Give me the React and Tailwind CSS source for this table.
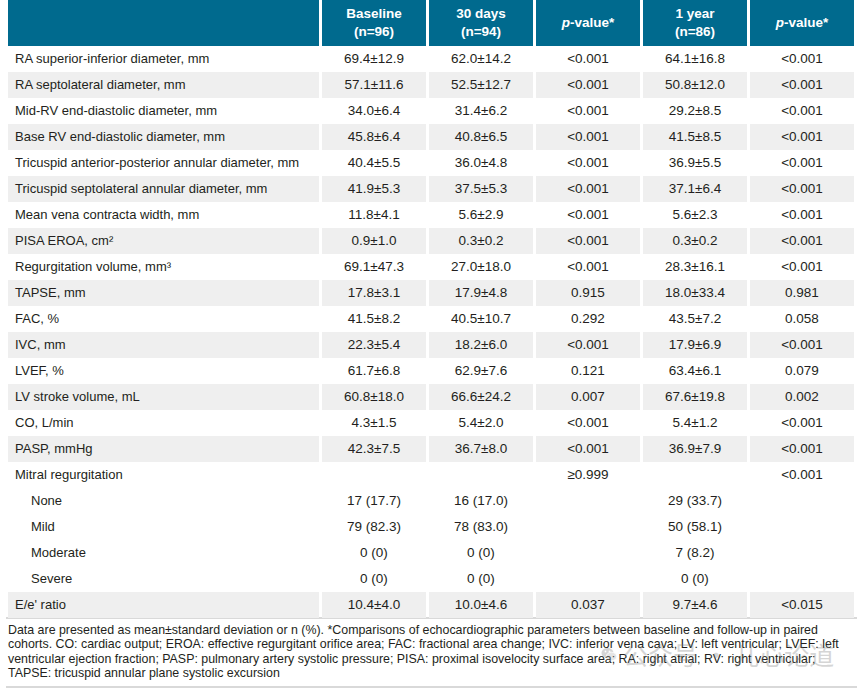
import React from "react";

const rows = [
  { label: "RA superior-inferior diameter, mm", v: ["69.4±12.9", "62.0±14.2", "<0.001", "64.1±16.8", "<0.001"] },
  { label: "RA septolateral diameter, mm", v: ["57.1±11.6", "52.5±12.7", "<0.001", "50.8±12.0", "<0.001"] },
  { label: "Mid-RV end-diastolic diameter, mm", v: ["34.0±6.4", "31.4±6.2", "<0.001", "29.2±8.5", "<0.001"] },
  { label: "Base RV end-diastolic diameter, mm", v: ["45.8±6.4", "40.8±6.5", "<0.001", "41.5±8.5", "<0.001"] },
  { label: "Tricuspid anterior-posterior annular diameter, mm", v: ["40.4±5.5", "36.0±4.8", "<0.001", "36.9±5.5", "<0.001"] },
  { label: "Tricuspid septolateral annular diameter, mm", v: ["41.9±5.3", "37.5±5.3", "<0.001", "37.1±6.4", "<0.001"] },
  { label: "Mean vena contracta width, mm", v: ["11.8±4.1", "5.6±2.9", "<0.001", "5.6±2.3", "<0.001"] },
  { label: "PISA EROA, cm²", v: ["0.9±1.0", "0.3±0.2", "<0.001", "0.3±0.2", "<0.001"] },
  { label: "Regurgitation volume, mm³", v: ["69.1±47.3", "27.0±18.0", "<0.001", "28.3±16.1", "<0.001"] },
  { label: "TAPSE, mm", v: ["17.8±3.1", "17.9±4.8", "0.915", "18.0±33.4", "0.981"] },
  { label: "FAC, %", v: ["41.5±8.2", "40.5±10.7", "0.292", "43.5±7.2", "0.058"] },
  { label: "IVC, mm", v: ["22.3±5.4", "18.2±6.0", "<0.001", "17.9±6.9", "<0.001"] },
  { label: "LVEF, %", v: ["61.7±6.8", "62.9±7.6", "0.121", "63.4±6.1", "0.079"] },
  { label: "LV stroke volume, mL", v: ["60.8±18.0", "66.6±24.2", "0.007", "67.6±19.8", "0.002"] },
  { label: "CO, L/min", v: ["4.3±1.5", "5.4±2.0", "<0.001", "5.4±1.2", "<0.001"] },
  { label: "PASP, mmHg", v: ["42.3±7.5", "36.7±8.0", "<0.001", "36.9±7.9", "<0.001"] },
  { label: "Mitral regurgitation", v: ["", "", "≥0.999", "", "<0.001"] },
  { label: "None", sub: true, v: ["17 (17.7)", "16 (17.0)", "", "29 (33.7)", ""] },
  { label: "Mild", sub: true, v: ["79 (82.3)", "78 (83.0)", "", "50 (58.1)", ""] },
  { label: "Moderate", sub: true, v: ["0 (0)", "0 (0)", "", "7 (8.2)", ""] },
  { label: "Severe", sub: true, v: ["0 (0)", "0 (0)", "", "0 (0)", ""] },
  { label: "E/e' ratio", v: ["10.4±4.0", "10.0±4.6", "0.037", "9.7±4.6", "<0.015"], gray: true },
];

function HeaderCell({ children }) {
  return (
    <div className="bg-[#006a8e] flex flex-col items-center justify-center text-white font-bold text-[13.5px] leading-[18px]">
      {children}
    </div>
  );
}

export default function App() {
  return (
    <div
      className="w-[863px] h-[691px] bg-white relative overflow-hidden text-[#231f20]"
      style={{ fontFamily: '"Liberation Sans", Arial, sans-serif' }}
    >
      <div className="ml-[8px] w-[846px]">
        {/* header */}
        <div className="grid grid-cols-[311px_repeat(5,104px)] gap-x-[3px] h-[46px]">
          <div className="bg-[#006a8e]" />
          <HeaderCell>
            <span>Baseline</span>
            <span>(n=96)</span>
          </HeaderCell>
          <HeaderCell>
            <span>30 days</span>
            <span>(n=94)</span>
          </HeaderCell>
          <HeaderCell>
            <span>
              <i>p</i>-value*
            </span>
          </HeaderCell>
          <HeaderCell>
            <span>1 year</span>
            <span>(n=86)</span>
          </HeaderCell>
          <HeaderCell>
            <span>
              <i>p</i>-value*
            </span>
          </HeaderCell>
        </div>

        {/* body */}
        {rows.map((r, i) => {
          const gray = r.gray || (i < 16 && i % 2 === 1);
          const bg = gray ? "bg-[#efefef]" : "bg-white";
          return (
            <div key={i} className="grid grid-cols-[311px_repeat(5,104px)] gap-x-[3px] h-[26px]">
              <div
                className={`${bg} flex items-center text-[13px] ${r.sub ? "pl-[23px]" : "pl-[7px]"}`}
              >
                {r.label}
              </div>
              {r.v.map((val, j) => (
                <div key={j} className={`${bg} flex items-center justify-center text-[13.5px]`}>
                  {val}
                </div>
              ))}
            </div>
          );
        })}
      </div>

      {/* footnote */}
      <div className="mx-[6px] -mt-[1px] border-t-2 border-b-2 border-[#d9d9d9] pt-[4px] pb-[5px] pl-[2px] text-[12.4px] leading-[14.4px] whitespace-nowrap">
        Data are presented as mean±standard deviation or n (%). *Comparisons of echocardiographic parameters between
        baseline and follow-up in paired
        <br />
        cohorts. CO: cardiac output; EROA: effective regurgitant orifice area; FAC: fractional area change; IVC:
        inferior vena cava; LV: left ventricular; LVEF: left
        <br />
        ventricular ejection fraction; PASP: pulmonary artery systolic pressure; PISA: proximal isovelocity surface
        area; RA: right atrial; RV: right ventricular;
        <br />
        TAPSE: tricuspid annular plane systolic excursion
      </div>

      {/* watermark */}
      <div className="absolute left-[601px] top-[640px] flex items-center gap-[6px] opacity-30 text-[#777] pointer-events-none">
        <svg width="16" height="15" viewBox="0 0 16 15">
          <ellipse cx="6.5" cy="6" rx="6" ry="5" fill="#777" />
          <ellipse cx="10.5" cy="9.5" rx="5.2" ry="4.3" fill="#aaa" stroke="#fff" strokeWidth="0.8" />
          <circle cx="4.5" cy="4.5" r="0.9" fill="#fff" />
          <circle cx="8.5" cy="4.5" r="0.9" fill="#fff" />
        </svg>
        <span
          className="text-[25px] leading-[28px]"
          style={{ fontFamily: '"Noto Sans CJK SC", sans-serif' }}
        >
          公众号 · 儿心论道
        </span>
      </div>
    </div>
  );
}
